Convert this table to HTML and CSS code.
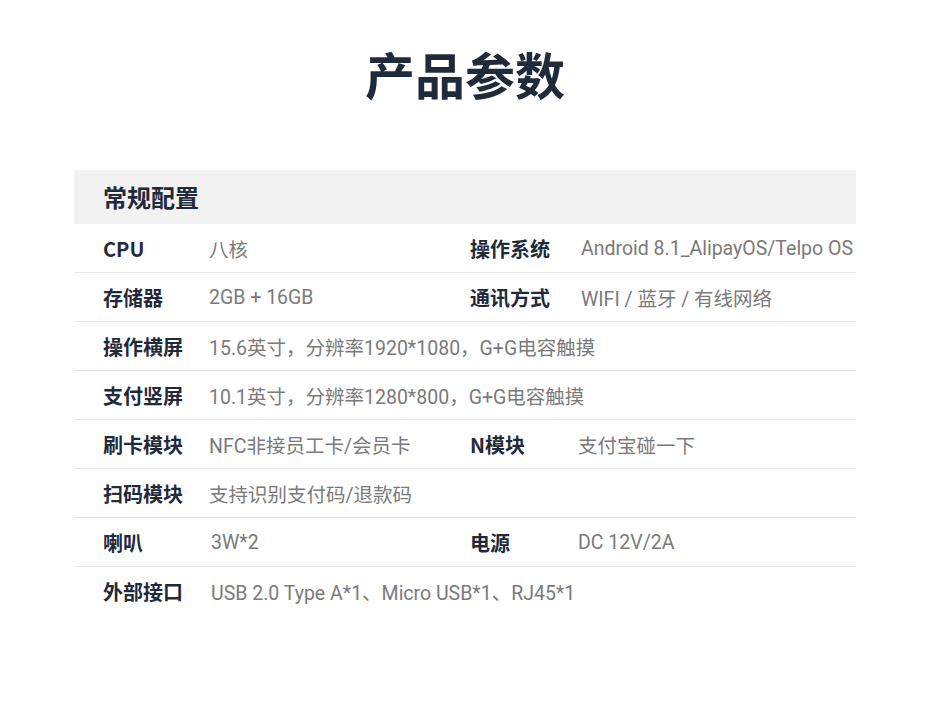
FILE: index.html
```html
<!DOCTYPE html>
<html lang="zh">
<head>
<meta charset="utf-8">
<link rel="stylesheet" href="styles.css">
</head>
<body>
<div class="page">
  <h1 class="title">产品参数</h1>
  <div class="spec">
    <div class="spec-head">常规配置</div>
    <div class="row">
      <div class="cell"><span class="label">CPU</span><span class="value">八核</span></div>
      <div class="cell right"><span class="label">操作系统</span><span class="value">Android 8.1_AlipayOS/Telpo OS</span></div>
    </div>
    <div class="row">
      <div class="cell"><span class="label">存储器</span><span class="value">2GB + 16GB</span></div>
      <div class="cell right"><span class="label">通讯方式</span><span class="value">WIFI / 蓝牙 / 有线网络</span></div>
    </div>
    <div class="row">
      <div class="cell wide"><span class="label">操作横屏</span><span class="value">15.6英寸，分辨率1920*1080，G+G电容触摸</span></div>
    </div>
    <div class="row">
      <div class="cell wide"><span class="label">支付竖屏</span><span class="value">10.1英寸，分辨率1280*800，G+G电容触摸</span></div>
    </div>
    <div class="row">
      <div class="cell"><span class="label">刷卡模块</span><span class="value">NFC非接员工卡/会员卡</span></div>
      <div class="cell right"><span class="label">N模块</span><span class="value alt">支付宝碰一下</span></div>
    </div>
    <div class="row">
      <div class="cell wide"><span class="label">扫码模块</span><span class="value">支持识别支付码/退款码</span></div>
    </div>
    <div class="row">
      <div class="cell"><span class="label">喇叭</span><span class="value shift">3W*2</span></div>
      <div class="cell right"><span class="label">电源</span><span class="value alt">DC 12V/2A</span></div>
    </div>
    <div class="row last">
      <div class="cell wide"><span class="label">外部接口</span><span class="value shift">USB 2.0 Type A*1、Micro USB*1、RJ45*1</span></div>
    </div>
  </div>
</div>
</body>
</html>
```
FILE: styles.css
```css
html, body {
  margin: 0;
  padding: 0;
  background: #ffffff;
}
body {
  font-family: "Noto Sans CJK SC", "Noto Sans", sans-serif;
  color: #1f2a3a;
}
.page {
  width: 930px;
  height: 708px;
  display: flex;
  flex-direction: column;
  align-items: center;
}
.title {
  margin: 41px 0 0 0;
  height: 64px;
  line-height: 64px;
  font-size: 50px;
  font-weight: 700;
  color: #1f2a3a;
}
.spec {
  margin-top: 65px;
  width: 782px;
}
.spec-head {
  height: 54px;
  line-height: 54px;
  background: #f2f2f2;
  padding-left: 29px;
  font-size: 24px;
  font-weight: 700;
  color: #1f2a3a;
}
.row {
  display: flex;
  height: 48px;
  border-bottom: 1px solid #e8e8e8;
  align-items: center;
}
.row.last {
  border-bottom: none;
}
.cell {
  display: flex;
  align-items: center;
  width: 367px;
  padding-left: 29px;
  flex: none;
}
.cell.wide {
  width: auto;
}
.cell.right {
  padding-left: 0;
  width: 386px;
}
.label {
  width: 106px;
  flex: none;
  font-size: 20px;
  font-weight: 700;
  color: #1f2a3a;
}
.cell.right .label {
  width: 111px;
}
.cell.right .value.alt {
  margin-left: -3px;
}
.value {
  font-family: Roboto, "Noto Sans CJK SC", sans-serif;
  font-size: 19.5px;
  font-weight: 400;
  color: #7a7a7a;
  white-space: nowrap;
}
.value.shift {
  margin-left: 2px;
}
```
